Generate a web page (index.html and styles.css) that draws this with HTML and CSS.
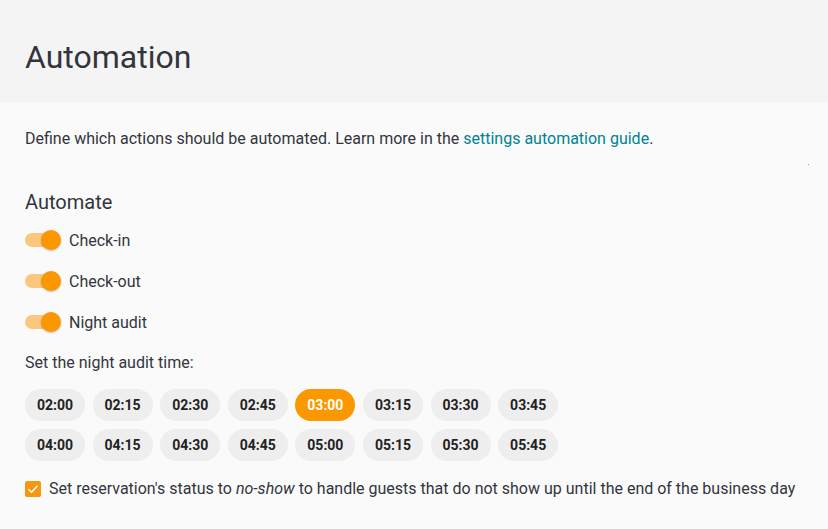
FILE: index.html
```html
<!DOCTYPE html>
<html>
<head>
    <title>Automation</title>
    <link rel="stylesheet" href="styles.css">
</head>
<body>
    <div class="page-header">
        <h1 class="page-title">Automation</h1>
    </div>
    <div class="page-content">
        <p class="intro">Define which actions should be automated. Learn more in the <a href="#" class="link">settings automation guide</a>.</p>
        <span class="stray-dot"></span>
        <h2 class="section-title">Automate</h2>
        <div class="toggle-list">
            <label class="toggle-row">
                <span class="toggle"><span class="toggle-knob"></span></span>
                <span class="toggle-label">Check-in</span>
            </label>
            <label class="toggle-row">
                <span class="toggle"><span class="toggle-knob"></span></span>
                <span class="toggle-label">Check-out</span>
            </label>
            <label class="toggle-row">
                <span class="toggle"><span class="toggle-knob"></span></span>
                <span class="toggle-label">Night audit</span>
            </label>
        </div>
        <div class="time-title">Set the night audit time:</div>
        <div class="time-grid">
            <button class="chip">02:00</button>
            <button class="chip">02:15</button>
            <button class="chip">02:30</button>
            <button class="chip">02:45</button>
            <button class="chip active">03:00</button>
            <button class="chip">03:15</button>
            <button class="chip">03:30</button>
            <button class="chip">03:45</button>
            <button class="chip">04:00</button>
            <button class="chip">04:15</button>
            <button class="chip">04:30</button>
            <button class="chip">04:45</button>
            <button class="chip">05:00</button>
            <button class="chip">05:15</button>
            <button class="chip">05:30</button>
            <button class="chip">05:45</button>
        </div>
        <label class="check-row">
            <span class="checkbox">
                <svg width="12" height="10" viewBox="0 0 12 10"><path d="M1.5 5.2 L4.6 8.2 L10.5 1.8" fill="none" stroke="#fff" stroke-width="1.6"/></svg>
            </span>
            <span class="check-label">Set reservation's status to <em>no-show</em> to handle guests that do not show up until the end of the business day</span>
        </label>
    </div>
</body>
</html>
```

FILE: styles.css
```css
body {
    margin: 0;
    padding: 0;
    background: #fafafa;
    color: #33353d;
    font-family: Roboto, "Noto Sans", sans-serif;
}
.page-header {
    height: 102px;
    background: #f4f4f4;
    padding: 0 25px;
    display: flex;
    align-items: center;
    box-sizing: border-box;
    padding-top: 12px;
}
.page-title {
    margin: 0;
    font-size: 32px;
    font-weight: 400;
    line-height: 38px;
    color: #33353d;
}
.page-content {
    padding: 0 25px;
    position: relative;
}
.intro {
    margin: 0;
    padding-top: 27px;
    font-size: 16px;
    line-height: 20px;
}
.link {
    color: #00838f;
    text-decoration: none;
}
.stray-dot {
    position: absolute;
    left: 808px;
    top: 62px;
    width: 1px;
    height: 1px;
    background: #999;
}
.section-title {
    margin: 41px 0 0;
    font-size: 20px;
    font-weight: 400;
    line-height: 24px;
}
.toggle-list {
    display: flex;
    flex-direction: column;
    gap: 17px;
    margin-top: 14px;
}
.toggle-row {
    display: flex;
    align-items: center;
    height: 24px;
    cursor: pointer;
}
.toggle {
    position: relative;
    width: 34px;
    height: 14px;
    border-radius: 7px;
    background: #fbc77f;
    margin-right: 10px;
}
.toggle-knob {
    position: absolute;
    right: -2px;
    top: -3px;
    width: 20px;
    height: 20px;
    border-radius: 50%;
    background: #fb9800;
    box-shadow: 0 1px 2px rgba(0, 0, 0, 0.25);
}
.toggle-label {
    font-size: 16px;
}
.time-title {
    margin-top: 19px;
    font-size: 16px;
    line-height: 20px;
}
.time-grid {
    display: grid;
    grid-template-columns: repeat(8, 60px);
    gap: 8px 7.6px;
    margin-top: 16px;
}
.chip {
    height: 32px;
    border: none;
    border-radius: 16px;
    background: #eeeeee;
    color: #222;
    font-family: Roboto, sans-serif;
    font-size: 14px;
    font-weight: 700;
    padding: 0;
    cursor: pointer;
}
.chip.active {
    background: #fb9800;
    color: #fff;
}
.check-row {
    display: flex;
    align-items: center;
    gap: 8px;
    margin-top: 18px;
}
.checkbox {
    width: 16px;
    height: 16px;
    border-radius: 2px;
    background: #f7960f;
    display: flex;
    align-items: center;
    justify-content: center;
}
.check-label {
    font-size: 16px;
}
```
